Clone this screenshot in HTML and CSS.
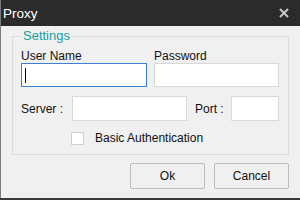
FILE: index.html
```html
<!DOCTYPE html>
<html lang="en">
<head>
<meta charset="UTF-8" />
<title>Proxy</title>
<link rel="stylesheet" href="styles.css">
</head>
<body>
<div class="window">
  <div class="titlebar">
    <span class="title">Proxy</span>
    <svg class="close" width="10" height="10" viewBox="0 0 10 10">
      <path d="M1 1L9 9M9 1L1 9" stroke="#c8c8c8" stroke-width="2"/>
    </svg>
  </div>

  <div class="content">
    <fieldset class="group">
      <legend>Settings</legend>

      <div class="row-top">
        <div class="field">
          <label>User Name</label>
          <div class="input focused"><span class="caret"></span></div>
        </div>
        <div class="field">
          <label>Password</label>
          <div class="input"></div>
        </div>
      </div>

      <div class="row-server">
        <label class="server-label">Server :</label>
        <div class="input server"></div>
        <label class="port-label">Port :</label>
        <div class="input port"></div>
      </div>

      <div class="row-check">
        <span class="checkbox"></span>
        <label>Basic Authentication</label>
      </div>
    </fieldset>

    <div class="buttons">
      <button class="btn">Ok</button>
      <button class="btn">Cancel</button>
    </div>
  </div>
</div>
</body>
</html>
```

FILE: styles.css
```css
body {
  margin: 0;
  width: 300px;
  height: 200px;
  overflow: hidden;
  font-family: "Liberation Sans", Arial, sans-serif;
  font-size: 12px;
  color: #111;
  background: #3a3a3a;
}

.window {
  width: 299px;
  height: 198px;
  border-left: 1px solid #7a7a7a;
  display: flex;
  flex-direction: column;
}

/* title bar */
.titlebar {
  height: 26px;
  background: #2b2b2b;
  color: #fff;
  display: flex;
  align-items: center;
  justify-content: space-between;
  padding: 0 11px 0 2px;
  flex-shrink: 0;
}
.title {
  font-size: 13.5px;
}

/* body */
.content {
  flex: 1;
  background: #f0f0f0;
  padding: 2px 11px 0 11px;
}

.group {
  margin: 0;
  border: 1px solid #dcdcdc;
  padding: 0 9px 0 8px;
  height: 125px;
}
.group legend {
  font-size: 13px;
  line-height: 16px;
  color: #16a0a0;
  padding: 0 2px;
}

.row-top {
  display: grid;
  grid-template-columns: 126px 125px;
  gap: 7px;
  margin-top: 5px;
}
.field label {
  display: block;
  line-height: 14px;
  height: 14px;
}

.input {
  height: 22px;
  background: #fff;
  border: 1px solid #d9d9d9;
  position: relative;
}
.input.focused {
  border-color: #3d7fd6;
}
.caret {
  position: absolute;
  left: 3px;
  top: 4px;
  width: 1px;
  height: 15px;
  background: #000;
}

.row-server {
  display: flex;
  align-items: center;
  margin-top: 9px;
}
.server-label {
  width: 51px;
}
.input.server {
  width: 113px;
  height: 23px;
}
.port-label {
  margin-left: 8px;
  width: 36px;
}
.input.port {
  width: 46px;
  height: 23px;
}

.row-check {
  display: flex;
  align-items: center;
  margin: 10px 0 0 50px;
}
.checkbox {
  width: 11px;
  height: 11px;
  background: #fff;
  border: 1px solid #cfcfcf;
  margin-right: 11px;
}

/* buttons */
.buttons {
  display: flex;
  justify-content: flex-end;
  gap: 9px;
  margin-top: 8px;
}
.btn {
  width: 75px;
  height: 26px;
  font-family: inherit;
  font-size: 12px;
  color: #111;
  background: #f0f0f0;
  border: 1px solid #bdbdbd;
  border-radius: 2px;
  padding: 0;
}
```
